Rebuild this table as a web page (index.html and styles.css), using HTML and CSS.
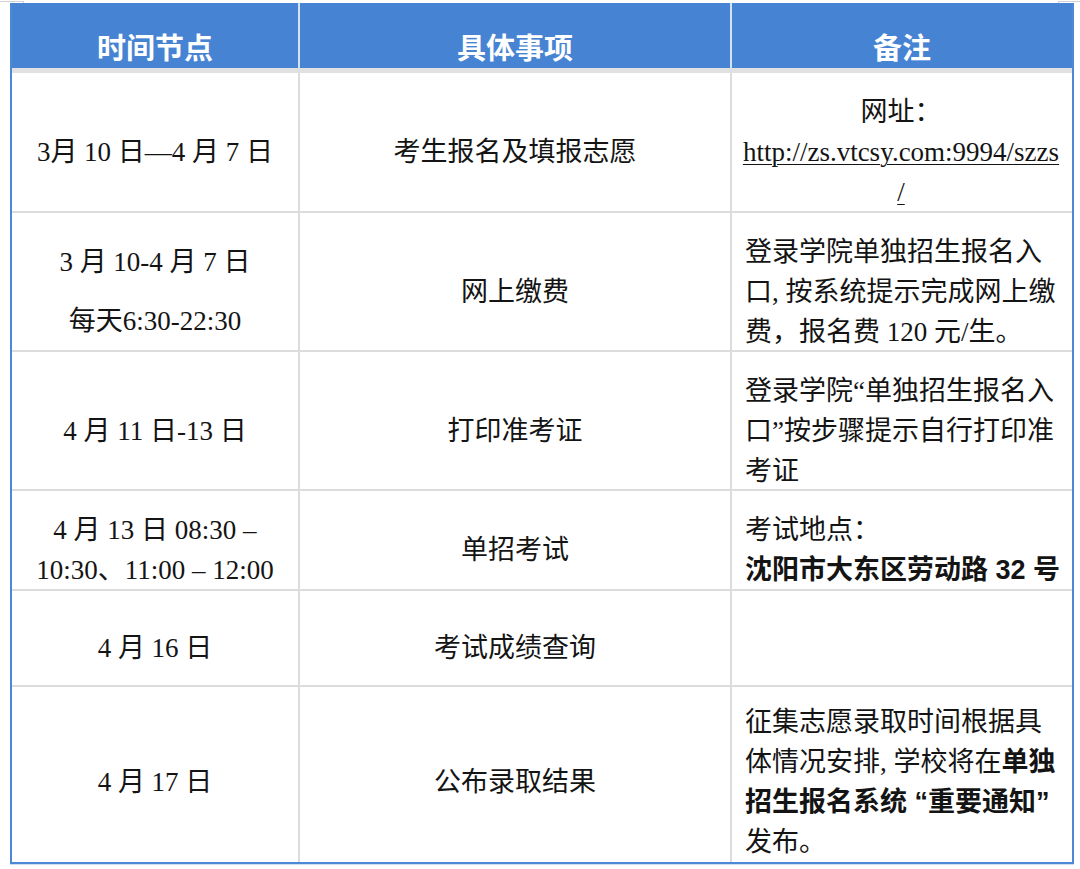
FILE: index.html
```html
<!DOCTYPE html>
<html lang="zh-CN">
<head>
<meta charset="utf-8">
<title>单招时间安排</title>
<link rel="stylesheet" href="styles.css">
</head>
<body>
<div class="topline"><span class="tick tick-l"></span><span class="tick tick-r"></span></div>
<div class="table">
  <div class="th">时间节点</div>
  <div class="th">具体事项</div>
  <div class="th last">备注</div>

  <div class="td"><div class="c">3月 10 日—4 月 7 日</div></div>
  <div class="td"><div class="c">考生报名及填报志愿</div></div>
  <div class="td note center"><div class="c">网址：<br><span class="url">http://zs.vtcsy.com:9994/szzs</span><br><span class="url">/</span></div></div>

  <div class="td"><div class="c"><p class="para">3 月 10-4 月 7 日</p><p class="para">每天6:30-22:30</p></div></div>
  <div class="td"><div class="c">网上缴费</div></div>
  <div class="td note"><div class="c">登录学院单独招生报名入<br>口, 按系统提示完成网上缴<br>费，报名费 120 元/生。</div></div>

  <div class="td"><div class="c">4 月 11 日-13 日</div></div>
  <div class="td"><div class="c">打印准考证</div></div>
  <div class="td note"><div class="c">登录学院“单独招生报名入<br>口”按步骤提示自行打印准<br>考证</div></div>

  <div class="td"><div class="c">4 月 13 日 08:30 –<br>10:30、11:00 – 12:00</div></div>
  <div class="td"><div class="c">单招考试</div></div>
  <div class="td note"><div class="c">考试地点：<br><span class="b">沈阳市大东区劳动路 32 号</span></div></div>

  <div class="td"><div class="c">4 月 16 日</div></div>
  <div class="td"><div class="c">考试成绩查询</div></div>
  <div class="td note"><div class="c"></div></div>

  <div class="td lastrow"><div class="c">4 月 17 日</div></div>
  <div class="td lastrow"><div class="c">公布录取结果</div></div>
  <div class="td note lastrow"><div class="c">征集志愿录取时间根据具<br>体情况安排, 学校将在<span class="b">单独</span><br><span class="b">招生报名系统 “重要通知”</span><br>发布。</div></div>
</div>
</body>
</html>
```

FILE: styles.css
```css
html, body {
  margin: 0;
  padding: 0;
  background: #ffffff;
}

body {
  width: 1080px;
  height: 869px;
  overflow: hidden;
  font-family: "Liberation Serif", "Noto Sans CJK SC", serif;
  color: #141414;
}

.topline {
  height: 3px;
  display: flex;
  justify-content: space-between;
}

.tick {
  display: block;
  width: 24px;
  height: 2px;
  border-top: 1px solid #d2d2d2;
  margin-top: 1px;
  box-sizing: border-box;
}

.tick-l {
  border-right: 1px solid #d2d2d2;
}

.tick-r {
  border-left: 1px solid #d2d2d2;
  width: 22px;
}

.table {
  display: grid;
  grid-template-columns: 288px 432px 340px;
  grid-template-rows: 70px 140px 139px 139px 100px 96px 175px;
  width: 1064px;
  margin-left: 10px;
  box-sizing: border-box;
  border-left: 2px solid #4d88d6;
  border-right: 2px solid #4d88d6;
  border-bottom: 2px solid #4d88d6;
  box-shadow: 0 1px 0 #cddcf2;
}

.th {
  box-sizing: border-box;
  background: #4783d3;
  color: #ffffff;
  font-family: "Noto Sans CJK SC", "Liberation Sans", sans-serif;
  font-weight: 700;
  font-size: 29px;
  line-height: 30px;
  display: flex;
  align-items: center;
  justify-content: center;
  padding-top: 20px;
  border-bottom: 5px solid #e1e1e1;
  border-right: 2px solid #d3e1f5;
}

.th.last {
  border-right: none;
}

.td {
  box-sizing: border-box;
  display: flex;
  flex-direction: column;
  justify-content: center;
  align-items: center;
  text-align: center;
  padding-top: 20px;
  font-size: 27px;
  line-height: 40px;
  border-right: 2px solid #dcdcdc;
  border-bottom: 2px solid #dcdcdc;
  min-height: 0;
  overflow: hidden;
}

.td.note {
  border-right: none;
  align-items: flex-start;
  text-align: left;
  padding-left: 13px;
  padding-right: 2px;
  white-space: nowrap;
}

.td.note.center {
  align-items: center;
  text-align: center;
  padding-left: 0;
}

.td.lastrow {
  border-bottom: none;
  padding-top: 14px;
}

.para {
  margin: 0;
}

.para + .para {
  margin-top: 19px;
}

.url {
  text-decoration: underline;
  text-decoration-thickness: 1px;
  text-underline-offset: 3px;
}

.b {
  font-weight: 700;
  font-family: "Liberation Sans", "Noto Sans CJK SC", sans-serif;
}
```
